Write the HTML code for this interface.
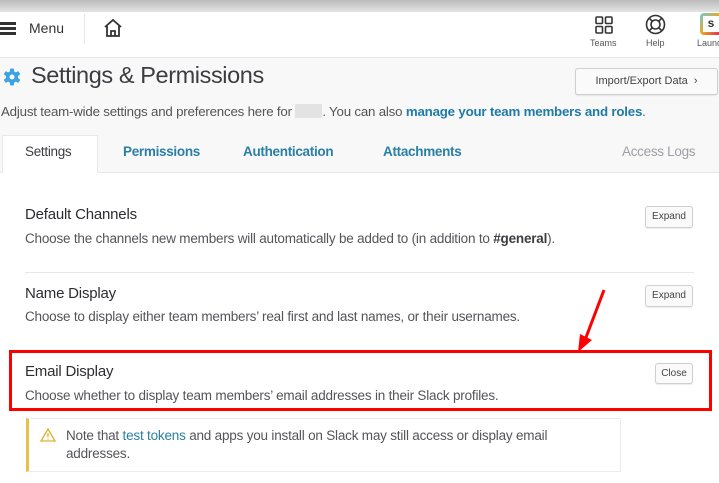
<!DOCTYPE html>
<html><head><style>
*{margin:0;padding:0;box-sizing:border-box}
body{width:719px;height:483px;overflow:hidden;background:#f8f8f8;font-family:"Liberation Sans",sans-serif;color:#3d3c40;position:relative}
.a{position:absolute;white-space:nowrap}
.top{left:0;top:0;width:719px;height:12px;background:linear-gradient(#bbb,#e4e4e4)}
.nav{left:0;top:12px;width:719px;height:46px;background:#fff;border-bottom:1px solid #e6e6e6}
.btn{background:#fafafa;border:1px solid #cfcfcf;border-radius:3px;font-size:10px;color:#444;text-align:center;box-shadow:0 1px 1px rgba(0,0,0,.08)}
.link{color:#2a80b9;font-weight:bold}
.h{font-size:15px;color:#2c2d30;letter-spacing:-.2px}
.d{font-size:13.5px;color:#555459;letter-spacing:-.2px}
.tab{font-size:13.5px;color:#2a7fa6;font-weight:bold;letter-spacing:-.3px}
</style></head><body>
<div class="a top"></div>
<div class="a nav"></div>
<div class="a" style="left:0;top:22px;width:16px;height:13px;border-top:3px solid #333;border-bottom:3px solid #333"></div>
<div class="a" style="left:0;top:27px;width:16px;height:3px;background:#333"></div>
<div class="a" style="left:29px;top:20px;font-size:14px;color:#333">Menu</div>
<div class="a" style="left:84px;top:14px;width:1px;height:30px;background:#e6e6e6"></div>
<svg class="a" style="left:102px;top:17px" width="22" height="22" viewBox="0 0 22 22" fill="none" stroke="#333" stroke-width="1.8"><path d="M3 10 L11 3 L19 10 M5 9 V19 H17 V9 M9 19 V14 H13 V19"/></svg>
<svg class="a" style="left:595px;top:16px" width="18" height="18" viewBox="0 0 18 18" fill="none" stroke="#333" stroke-width="1.6"><rect x="1" y="1" width="6.5" height="6.5" rx="1"/><rect x="10.5" y="1" width="6.5" height="6.5" rx="1"/><rect x="1" y="10.5" width="6.5" height="6.5" rx="1"/><rect x="10.5" y="10.5" width="6.5" height="6.5" rx="1"/></svg>
<div class="a" style="left:590px;top:38px;font-size:9px;color:#555">Teams</div>
<svg class="a" style="left:645px;top:14px" width="21" height="21" viewBox="0 0 21 21" fill="none" stroke="#333" stroke-width="1.6"><circle cx="10.5" cy="10.5" r="9"/><circle cx="10.5" cy="10.5" r="4.5"/><path d="M4 4L7.3 7.3M17 4L13.7 7.3M4 17L7.3 13.7M17 17L13.7 13.7"/></svg>
<div class="a" style="left:646px;top:38px;font-size:9px;color:#555">Help</div>
<div class="a" style="left:700px;top:13px;width:22px;height:22px;border-radius:4px;background:linear-gradient(135deg,#6ecadc,#e9a820 50%,#e01563);"></div>
<div class="a" style="left:703px;top:16px;width:16px;height:16px;background:#fff;font-size:12px;font-weight:bold;text-align:center;color:#333">s</div>
<div class="a" style="left:697px;top:38px;font-size:9px;color:#555">Launc</div>
<svg class="a" style="left:3px;top:68px" width="18" height="18" viewBox="0 0 18 18"><g fill="#3aa3e3"><circle cx="9" cy="9" r="6"/><rect x="7" y="0.5" width="4" height="17" rx="1"/><rect x="7" y="0.5" width="4" height="17" rx="1" transform="rotate(60 9 9)"/><rect x="7" y="0.5" width="4" height="17" rx="1" transform="rotate(120 9 9)"/></g><circle cx="9" cy="9" r="2.5" fill="#f8f8f8"/></svg>
<div class="a" style="left:31px;top:62px;font-size:23.5px;color:#3d3c40;letter-spacing:-.4px">Settings &amp; Permissions</div>
<div class="a btn" style="left:575px;top:68px;width:143px;height:27px;line-height:25px;font-size:11px">Import/Export Data &nbsp;›</div>
<div class="a" style="left:1px;top:104px;font-size:13.3px;color:#555459;letter-spacing:-.2px">Adjust team-wide settings and preferences here for <span style="display:inline-block;width:27px;height:14px;background:#e3e3e3;vertical-align:-2px"></span>. You can also <span class="link" style="color:#1f7aa6">manage your team members and roles</span>.</div>
<div class="a" style="left:0;top:172px;width:719px;height:311px;background:#fff;border-top:1px solid #e8e8e8"></div>
<div class="a" style="left:2px;top:135px;width:96px;height:38px;background:#fff;border:1px solid #e8e8e8;border-bottom:none"></div>
<div class="a" style="left:25px;top:144px;font-size:13.5px;color:#3d3c40;letter-spacing:-.3px">Settings</div>
<div class="a tab" style="left:123px;top:144px">Permissions</div>
<div class="a tab" style="left:243px;top:144px">Authentication</div>
<div class="a tab" style="left:383px;top:144px">Attachments</div>
<div class="a" style="left:622px;top:144px;font-size:13.5px;color:#9e9ea6;letter-spacing:-.3px">Access Logs</div>
<div class="a h" style="left:25px;top:206px">Default Channels</div>
<div class="a d" style="left:25px;top:231px">Choose the channels new members will automatically be added to (in addition to <b style="color:#3d3c40">#general</b>).</div>
<div class="a btn" style="left:645px;top:206px;width:48px;height:22px;line-height:20px">Expand</div>
<div class="a" style="left:25px;top:272px;width:669px;height:1px;background:#e8e8e8"></div>
<div class="a h" style="left:25px;top:285px">Name Display</div>
<div class="a d" style="left:25px;top:309px">Choose to display either team members’ real first and last names, or their usernames.</div>
<div class="a btn" style="left:645px;top:285px;width:48px;height:22px;line-height:20px">Expand</div>
<div class="a" style="left:9px;top:350px;width:703px;height:61px;border:3px solid #f00"></div>
<div class="a h" style="left:25px;top:363px">Email Display</div>
<div class="a d" style="left:25px;top:388px">Choose whether to display team members’ email addresses in their Slack profiles.</div>
<div class="a btn" style="left:655px;top:363px;width:38px;height:21px;line-height:19px">Close</div>
<div class="a" style="left:26px;top:418px;width:595px;height:54px;background:#fff;border:1px solid #ececec;border-left:3px solid #e8c04a"></div>
<svg class="a" style="left:40px;top:428px" width="16" height="14" viewBox="0 0 16 14" fill="none" stroke="#e0b030" stroke-width="1.3"><path d="M8 1L15 13H1Z"/><path d="M8 5V9M8 10.5V11.5"/></svg>
<div class="a" style="left:66px;top:427px;font-size:13.5px;color:#555459;line-height:18px;letter-spacing:-.2px">Note that <span style="color:#2a7fa6">test tokens</span> and apps you install on Slack may still access or display email<br>addresses.</div>
<svg class="a" style="left:0;top:0" width="719" height="483"><path d="M604 290L585 340" stroke="#f00" stroke-width="3"/><path d="M578 352L580 334L592 340Z" fill="#f00"/></svg>
</body></html>
